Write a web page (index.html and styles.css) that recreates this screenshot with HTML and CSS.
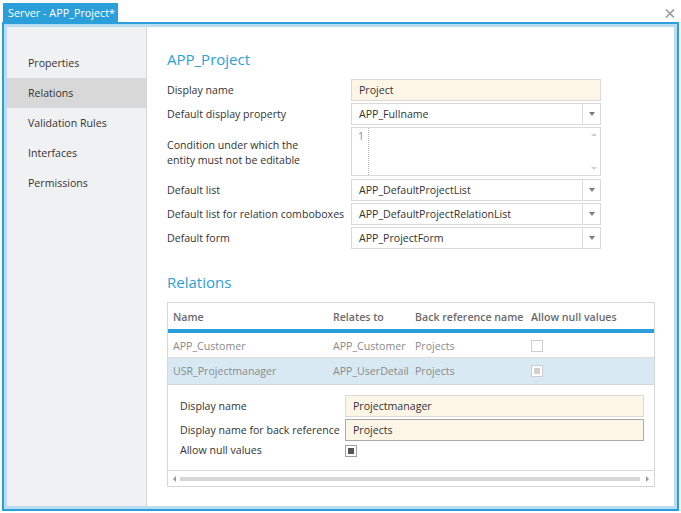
FILE: index.html
```html
<!DOCTYPE html>
<html>
<head>
<meta charset="utf-8">
<link rel="stylesheet" href="styles.css">
</head>
<body>
<div class="top">
  <div class="tab">Server - APP_Project*</div>
  <svg class="close" width="10" height="9" viewBox="0 0 10 9"><path d="M1 0.5L9 8.5M9 0.5L1 8.5" stroke="#9a9a9a" stroke-width="1.6" fill="none"/></svg>
</div>
<div class="window">
  <div class="inner">
    <nav class="side">
      <div class="nav-item">Properties</div>
      <div class="nav-item active">Relations</div>
      <div class="nav-item">Validation Rules</div>
      <div class="nav-item">Interfaces</div>
      <div class="nav-item">Permissions</div>
    </nav>
    <main class="main">
      <h1 class="h h1">APP_Project</h1>
      <div class="form">
        <div class="lbl">Display name</div>
        <div class="input beige">Project</div>
        <div class="lbl">Default display property</div>
        <div class="combo"><span class="val">APP_Fullname</span><span class="btn"><i class="arrow"></i></span></div>
        <div class="lbl two">Condition under which the<br>entity must not be editable</div>
        <div class="code">
          <div class="gutter">1</div>
          <div class="editor"></div>
          <div class="vscroll"><i class="up"></i><i class="down"></i></div>
        </div>
        <div class="lbl">Default list</div>
        <div class="combo"><span class="val">APP_DefaultProjectList</span><span class="btn"><i class="arrow"></i></span></div>
        <div class="lbl">Default list for relation comboboxes</div>
        <div class="combo"><span class="val">APP_DefaultProjectRelationList</span><span class="btn"><i class="arrow"></i></span></div>
        <div class="lbl">Default form</div>
        <div class="combo"><span class="val">APP_ProjectForm</span><span class="btn"><i class="arrow"></i></span></div>
      </div>
      <h2 class="h h2">Relations</h2>
      <div class="table">
        <div class="row head">
          <div>Name</div><div>Relates to</div><div>Back reference name</div><div>Allow null values</div>
        </div>
        <div class="row r1">
          <div>APP_Customer</div><div>APP_Customer</div><div>Projects</div><div><span class="cb"></span></div>
        </div>
        <div class="row r2">
          <div>USR_Projectmanager</div><div>APP_UserDetail</div><div>Projects</div><div><span class="cb dis"></span></div>
        </div>
        <div class="detail">
          <div class="lbl">Display name</div>
          <div class="input beige">Projectmanager</div>
          <div class="lbl">Display name for back reference</div>
          <div class="input beige focus">Projects</div>
          <div class="lbl">Allow null values</div>
          <div><span class="cb checked"></span></div>
        </div>
        <div class="hscroll">
          <i class="left"></i><span class="track"></span><i class="right"></i>
        </div>
      </div>
    </main>
  </div>
</div>
</body>
</html>
```

FILE: styles.css
```css
html, body {
  margin: 0;
  padding: 0;
}
body {
  width: 681px;
  height: 513px;
  overflow: hidden;
  background: #fff;
  font-family: "Open Sans", "Noto Sans", sans-serif;
  font-size: 10.6px;
  color: #333;
}
.top {
  height: 22px;
  display: flex;
  justify-content: space-between;
  align-items: flex-start;
}
.tab {
  margin: 3px 0 0 3px;
  width: 115px;
  height: 19px;
  box-sizing: border-box;
  padding-left: 5px;
  background: #2b9fd9;
  color: #fff;
  font-size: 10.8px;
  line-height: 19px;
  white-space: nowrap;
  overflow: hidden;
}
.close {
  margin: 9px 6px 0 0;
}
.window {
  margin-left: 2px;
  width: 677px;
  height: 489px;
  box-sizing: border-box;
  border: 2px solid #2b9fd9;
}
.inner {
  height: 100%;
  box-sizing: border-box;
  border: 3px solid #b8ddf2;
  display: flex;
}
.side {
  width: 140px;
  flex: none;
  box-sizing: border-box;
  background: #f0f1f3;
  border-right: 1px solid #d4d4d4;
  padding-top: 21px;
}
.nav-item {
  height: 30px;
  line-height: 30px;
  padding-left: 21px;
}
.nav-item.active {
  background: #d9d8d8;
}
.main {
  flex: 1;
  padding-left: 20px;
}
.h {
  margin: 0;
  font-weight: 400;
  font-size: 15px;
  line-height: 20px;
  color: #2b9fd9;
}
.h1 {
  margin: 22px 0 10px;
}
.h2 {
  margin: 23px 0 10px;
}
.form {
  display: grid;
  grid-template-columns: 184px 250px;
  row-gap: 2px;
  align-items: center;
}
.lbl {
  white-space: nowrap;
}
.lbl.two {
  line-height: 15px;
  padding-top: 2px;
}
.input {
  height: 22px;
  box-sizing: border-box;
  border: 1px solid #dadada;
  padding-left: 7px;
  line-height: 20px;
  background: #fff;
}
.input.beige {
  background: #fdf6e7;
}
.input.focus {
  border-color: #a9a9a9;
}
.combo {
  height: 22px;
  box-sizing: border-box;
  border: 1px solid #dadada;
  display: flex;
  line-height: 20px;
}
.combo .val {
  flex: 1;
  padding-left: 7px;
}
.combo .btn {
  width: 17px;
  border-left: 1px solid #dadada;
  display: flex;
  align-items: center;
  justify-content: center;
}
.arrow {
  width: 0;
  height: 0;
  border-left: 3.5px solid transparent;
  border-right: 3.5px solid transparent;
  border-top: 4px solid #7a7a7a;
}
.code {
  height: 49px;
  margin-bottom: 1px;
  box-sizing: border-box;
  border: 1px solid #dadada;
  display: flex;
}
.gutter {
  width: 17px;
  box-sizing: border-box;
  border-right: 1px dotted #b5b5b5;
  color: #8a8a8a;
  padding-left: 6px;
  line-height: 14px;
  padding-top: 1px;
}
.editor {
  flex: 1;
}
.vscroll {
  width: 13px;
  display: flex;
  flex-direction: column;
  justify-content: space-between;
  align-items: center;
  padding: 5px 0 5px;
}
.vscroll .up {
  width: 0;
  height: 0;
  border-left: 3px solid transparent;
  border-right: 3px solid transparent;
  border-bottom: 3px solid #cfcfcf;
}
.vscroll .down {
  width: 0;
  height: 0;
  border-left: 3px solid transparent;
  border-right: 3px solid transparent;
  border-top: 3px solid #cfcfcf;
}
.table {
  width: 488px;
  box-sizing: border-box;
  border: 1px solid #d6d6d6;
}
.row {
  display: grid;
  grid-template-columns: 160px 82px 116px 1fr;
  padding-left: 5px;
  align-items: center;
  white-space: nowrap;
}
.row.head {
  height: 25px;
  border-bottom: 4px solid #2b9fd9;
  font-weight: 600;
  color: #6b6b6b;
  padding-top: 1px;
}
.row.r1 {
  height: 25px;
  border-bottom: 1px solid #dedede;
  color: #8a8a8a;
  padding-top: 2px;
  box-sizing: border-box;
}
.row.r2 {
  height: 26px;
  background: #d8e9f4;
  border-bottom: 1px solid #d6d6d6;
  color: #8a8a8a;
}
.cb {
  display: block;
  width: 12px;
  height: 12px;
  box-sizing: border-box;
  border: 1px solid #cdcdcd;
  background: #fff;
}
.cb.dis {
  background: #fff;
  position: relative;
}
.cb.dis::after {
  content: "";
  position: absolute;
  left: 2px;
  top: 2px;
  width: 6px;
  height: 6px;
  background: #cfcfcf;
}
.cb.checked {
  border-color: #a0a0a0;
  position: relative;
}
.cb.checked::after {
  content: "";
  position: absolute;
  left: 2px;
  top: 2px;
  width: 6px;
  height: 6px;
  background: #555;
}
.detail {
  display: grid;
  grid-template-columns: 165px 299px;
  row-gap: 2px;
  align-items: center;
  padding: 10px 0 13px 12px;
}
.detail .cb {
  margin-top: 1px;
}
.hscroll {
  height: 15px;
  border-top: 1px solid #d6d6d6;
  display: flex;
  align-items: center;
  padding: 0 5px;
}
.hscroll .track {
  flex: 1;
  height: 4px;
  background: #d6d6d6;
  margin: 0 6px 0 4px;
}
.hscroll .left {
  width: 0;
  height: 0;
  border-top: 3px solid transparent;
  border-bottom: 3px solid transparent;
  border-right: 3px solid #9a9a9a;
}
.hscroll .right {
  width: 0;
  height: 0;
  border-top: 3px solid transparent;
  border-bottom: 3px solid transparent;
  border-left: 3px solid #9a9a9a;
}
```
